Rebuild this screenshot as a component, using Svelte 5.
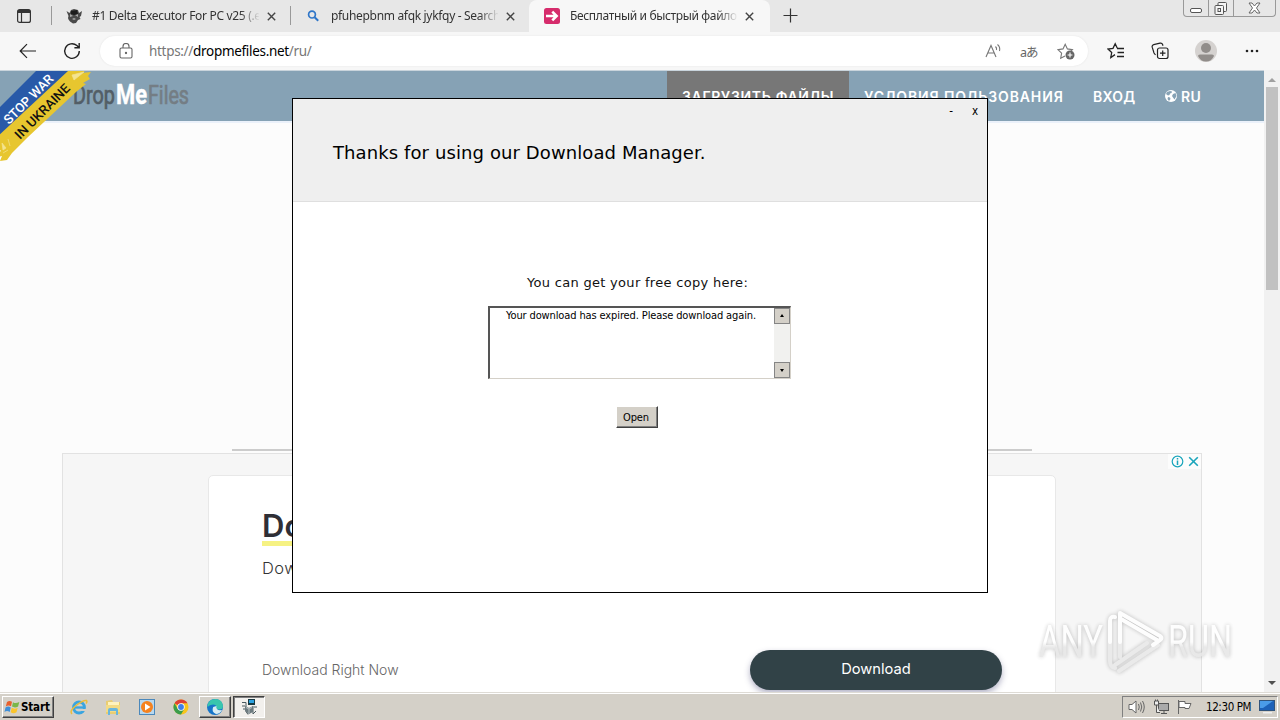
<script lang="ts">
  const tabs = [
    { icon: 'delta', title: '#1 Delta Executor For PC v25 (.exe)', active: false },
    { icon: 'search', title: 'pfuhepbnm afqk jykfqy - Search', active: false },
    { icon: 'arrow', title: 'Бесплатный и быстрый файлообменник', active: true },
  ];

  const nav = [
    { label: 'ЗАГРУЗИТЬ ФАЙЛЫ', cls: 'upload' },
    { label: 'УСЛОВИЯ ПОЛЬЗОВАНИЯ', cls: 'terms' },
    { label: 'ВХОД', cls: 'login' },
  ];
</script>

<div class="screen">
  <div class="tabstrip">
    <div class="tab-menu">
      <svg width="16" height="16" viewBox="0 0 16 16" fill="none" stroke="#333" stroke-width="1.2">
        <rect x="1.6" y="1.6" width="12.8" height="12.8" rx="2" />
        <path d="M2 3.5h12" stroke-width="3" />
        <path d="M5.5 5v9" />
      </svg>
    </div>

    {#each tabs as tab}
      <div class="tab" class:active={tab.active}>
        <span class="favicon">
          {#if tab.icon === 'delta'}
            <svg width="16" height="16" viewBox="0 0 16 16">
              <path d="M.5 3l3 2 1.500-3L8 1l4 1 1 3 3-2-1 5-1.500 1 1 2-2.500 1-2 3-3 .500-3-2-1.500-2L2 10l.5-2z" fill="#4a4a4a" />
              <path d="M4 6l3 2-3 1zM12 6l-3 1 3 2zM6 11l2-1 2 1-2 1z" fill="#aaa" />
              <path d="M5 3l6-1 1 4-4 1-3-1z" fill="#1c1c1c" />
            </svg>
          {:else if tab.icon === 'search'}
            <svg width="16" height="16" viewBox="0 0 16 16" fill="none" stroke="#2f76c8" stroke-width="1.7">
              <circle cx="7" cy="6.600" r="3.400" />
              <path d="M9.600 9.200l3.600 3.600" stroke-width="2" />
            </svg>
          {:else}
            <svg width="16" height="16" viewBox="0 0 16 16">
              <rect width="16" height="16" rx="2.5" fill="#d62c6c" />
              <path d="M2 8h10M8.3 3.7L12.6 8l-4.3 4.3" fill="none" stroke="#fff" stroke-width="2.6" />
            </svg>
          {/if}
        </span>
        <span class="tab-title">{tab.title}</span>
        <svg class="tab-close" width="9" height="9" viewBox="0 0 9 9" stroke="#444" stroke-width="1.4">
          <path d="M.8.8l7.4 7.4M8.2.8L.8 8.2" />
        </svg>
      </div>
    {/each}

    <svg class="new-tab" width="15" height="15" viewBox="0 0 15 15" stroke="#333" stroke-width="1.2">
      <path d="M7.5.5v14M.5 7.5h14" />
    </svg>

    <div class="caption">
      <span class="cap">
        <svg width="13" height="17" viewBox="0 0 13 17" fill="#fff" stroke="#555">
          <rect x=".5" y="8.5" width="11" height="4" rx="1.5" />
        </svg>
      </span>
      <span class="cap">
        <svg width="14" height="17" viewBox="0 0 14 17" fill="#f4f4f4" stroke="#555">
          <rect x="4" y="2.5" width="8.5" height="9" rx="1" />
          <rect x="1" y="5.5" width="8.5" height="9" rx="1" />
          <rect x="4" y="8.5" width="2.5" height="3" />
        </svg>
      </span>
      <span class="cap close">
        <svg width="13" height="17" viewBox="0 0 13 17" fill="#fff" stroke="#666">
          <path d="M1 3h3l2.500 3L9 3h3L8.500 8l3.500 5H9l-2.500-3L4 13H1l3.500-5z" />
        </svg>
      </span>
    </div>
  </div>

  <div class="toolbar">
    <svg class="back" width="18" height="16" viewBox="0 0 18 16" fill="none" stroke="#222" stroke-width="1.2">
      <path d="M17 8H1.500M8 1.200L1.200 8 8 14.800" />
    </svg>
    <svg class="reload" width="18" height="18" viewBox="0 0 18 18" fill="none" stroke="#222" stroke-width="1.4">
      <path d="M16.300 9a7.300 7.300 0 1 1-2.400-5.400l1.900 1.900M16.200 1v4.800h-4.800" />
    </svg>

    <div class="address">
      <svg class="lock" width="14" height="16" viewBox="0 0 14 16" fill="none" stroke="#666" stroke-width="1.1">
        <rect x="1" y="5" width="12" height="10" rx="1.500" />
        <path d="M4 5V3.500a3 3 0 0 1 6 0V5" />
        <circle cx="7" cy="10" r=".6" fill="#666" />
      </svg>
      <span class="url">https://<b>dropmefiles.net</b>/ru/</span>
      <svg class="read" width="17" height="16" viewBox="0 0 17 16" fill="none" stroke="#777" stroke-width="1.1">
        <path d="M1 14L6 2.500 11 14M2.800 10h6.400M10.500 3.500q1.500 1.500 1 3.500M12.500 1.500q3 2.500 2 6.500" />
      </svg>
      <span class="translate">aあ</span>
      <svg class="fav-add" width="18" height="18" viewBox="0 0 18 18" fill="none" stroke="#777" stroke-width="1.1">
        <path d="M8 14l-4.300 2.200.9-5L1 7.600l5-.7 2.200-4.600 2.200 4.600 5 .7-1.500 1.500" />
        <circle cx="13" cy="13" r="4.500" fill="#666" stroke="none" />
        <path d="M13 10.600v4.800M10.600 13h4.800" stroke="#fff" />
      </svg>
    </div>

    <svg class="favs" width="18" height="18" viewBox="0 0 18 18" fill="none" stroke="#222" stroke-width="1.3">
      <path d="M8 12.600l-4.200 2.900.9-5L1 7l5-.7L8.200 1.800l2 4.200M10 6.500h7M10.500 10.500H17M10 14.500h7" />
    </svg>
    <svg class="collections" width="18" height="18" viewBox="0 0 18 18" fill="none" stroke="#222" stroke-width="1.2">
      <rect x="6.500" y="6" width="10.500" height="10.500" rx="2" />
      <path d="M11.700 8.500v5.500M9 11.200h5.500M4.500 13L3 11 1.200 5.200q-.5-2 1.500-2.600L9 1.200q2-.4 2.600 1.300l.4 1.200" />
    </svg>
    <svg class="avatar" width="22" height="22" viewBox="0 0 22 22">
      <circle cx="11" cy="11" r="11" fill="#d5d2d0" />
      <circle cx="11" cy="8" r="5" fill="#918d8a" />
      <path d="M3 16q0-1.500 2-1.500h12q2 0 2 1.500-2.500 5.500-8 5.500T3 16z" fill="#918d8a" />
    </svg>
    <svg class="more" width="14" height="4" viewBox="0 0 14 4" fill="#222">
      <circle cx="2" cy="2" r="1.300" /><circle cx="7" cy="2" r="1.300" /><circle cx="12" cy="2" r="1.300" />
    </svg>
  </div>

  <div class="viewport">
    <div class="page">
      <header>
        <svg class="logo" width="120" height="34" viewBox="0 0 120 34">
          <text x="1" y="25" textLength="42" lengthAdjust="spacingAndGlyphs" class="logo-drop">Drop</text>
          <text x="44" y="25" textLength="31" lengthAdjust="spacingAndGlyphs" class="logo-me">Me</text>
          <text x="76" y="25" textLength="41" lengthAdjust="spacingAndGlyphs" class="logo-files">Files</text>
        </svg>
        <nav>
          {#each nav as item}
            <span class="nav-item {item.cls}">{item.label}</span>
          {/each}
          <span class="nav-item lang">
            <svg width="12" height="12" viewBox="0 0 12 12">
              <circle cx="6" cy="6" r="6" fill="#fff" />
              <path d="M5 1l2 .5L6.500 3 5 3.500 4.500 5 3 5.500 1 4 2 2zM8 4l2.500-1 1 3-2 3.500-1.500-2L7 6zM3 7l2 .5.500 1.500L4 11 2.500 9z" fill="#86a2b5" />
            </svg>
            RU
          </span>
        </nav>
      </header>

      <div class="rule"></div>

      <div class="ad">
        <div class="ad-card">
          <h1><span>Download</span></h1>
          <p class="ad-text">Download</p>
          <div class="ad-row">
            <span class="ad-note">Download Right Now</span>
            <button class="ad-button">Download</button>
          </div>
        </div>
        <div class="ad-badge">
          <svg width="13" height="13" viewBox="0 0 13 13" fill="none" stroke="#1aa5bb" stroke-width="1.200">
            <circle cx="6.500" cy="6.500" r="5.300" />
            <path d="M6.500 5.500v4.500M6.500 3v1.400" stroke-width="1.500" />
          </svg>
          <svg width="11" height="11" viewBox="0 0 11 11" stroke="#1aa5bb" stroke-width="1.600">
            <path d="M1.200 1.200l8.600 8.600M9.800 1.200L1.200 9.800" />
          </svg>
        </div>
      </div>
    </div>

    <div class="scrollbar">
      <span class="arrow-up"></span>
      <span class="thumb"></span>
      <span class="arrow-down"></span>
    </div>

    <svg class="ribbon" width="92" height="92" viewBox="0 0 92 92">
      <path d="M36 0h35L0 68V36z" fill="#2859a8" />
      <path d="M68 0h17l-3 2 9-1-3 4 2 3-7 4 3 1-10 8-48 45-16 16-5 7-7 1 2-5-4 1 3-7-5 3 1-7-2-7z" fill="#e7c62f" />
      <path d="M72 4l12-3-10 8zM2 72l4 5-3 2zM8 68l2 7M3 82l5-3" fill="#f4e491" stroke="#f4e491" stroke-width=".7" />
      <text transform="translate(9 54) rotate(-45)" textLength="64" lengthAdjust="spacingAndGlyphs" fill="#fff">STOP WAR</text>
      <text transform="translate(20 69) rotate(-45)" textLength="72" lengthAdjust="spacingAndGlyphs" fill="#111">IN UKRAINE</text>
    </svg>
  </div>

  <div class="taskbar">
    <div class="start">
      <svg width="17" height="16" viewBox="0 0 16 16">
        <path d="M2.500 3Q5 1 7.500 2.800L6.500 7.300Q4 5.700 1.300 7.500z" fill="#e8602c" />
        <path d="M8.500 3.200Q11 5 14.800 3L13.600 7.500Q10.500 9.300 7.500 7.600z" fill="#7ab648" />
        <path d="M1 8.500Q3.700 6.800 6.200 8.400L5.200 13Q2.500 11.200 0 13z" fill="#3f8fd8" />
        <path d="M7.200 8.800Q10 10.500 13.200 8.700L12 13.300Q9 15 6.200 13.300z" fill="#fbc52c" />
      </svg>
      <span>Start</span>
    </div>

    <div class="quick">
      <svg width="18" height="18" viewBox="0 0 18 18" fill="none">
        <circle cx="9" cy="9.500" r="5.400" stroke="#3aa5e0" stroke-width="3" />
        <path d="M5 9.500h10" stroke="#3aa5e0" stroke-width="2.300" />
        <path d="M11 12h6" stroke="#d4d0c8" stroke-width="2" />
        <path d="M2 16Q-1 13 6 7.500T16.500 2.500q1 1-.5 3" stroke="#ecbd3b" stroke-width="1.500" />
      </svg>
      <svg width="18" height="18" viewBox="0 0 18 18">
        <path d="M2 3l6-1 1 2h7v12H2z" fill="#e9cd72" />
        <path d="M4 4h11v5H4z" fill="#fff3bd" />
        <path d="M2 7h14v7H2z" fill="#f3db85" />
        <path d="M4 17v-5q0-2 2-2h6q2 0 2 2v5h-2v-4H6v4z" fill="#69b6dd" />
      </svg>
      <svg width="18" height="18" viewBox="0 0 18 18">
        <rect x="1.500" y="1.500" width="15" height="15" fill="#b8d8ef" stroke="#4b88bb" />
        <circle cx="9" cy="9" r="6" fill="#f5821f" />
        <path d="M7 5.500l5.500 3.500L7 12.500z" fill="#fff" />
      </svg>
      <svg width="18" height="18" viewBox="0 0 18 18">
        <circle cx="9" cy="9" r="7.500" fill="#f8c51c" />
        <path d="M2.500 5.250A7.500 7.500 0 0 1 15.500 5.250L9 5.250 9 9z" fill="#dd4036" />
        <path d="M2.500 5.250A7.500 7.500 0 0 0 9 16.500L12.200 10.900 9 9 5.800 10.900z" fill="#3a9c4b" />
        <circle cx="9" cy="9" r="3.700" fill="#fff" />
        <circle cx="9" cy="9" r="2.900" fill="#3f7fe8" />
      </svg>
    </div>

    <div class="task edge">
      <svg width="18" height="18" viewBox="0 0 18 18">
        <circle cx="9" cy="9" r="8" fill="#1675c9" />
        <path d="M1.500 7Q3 1 9.500 1t7.500 7q0 3.500-4 3.500-3 0-2.600-2Q10.500 6.500 7 6.500T1.500 9z" fill="#39c6ad" />
        <path d="M10.500 8q-1 5 5.500 4-2 4-6 4-5-2-2.800-7z" fill="#d8edf3" />
      </svg>
    </div>
    <div class="task pressed">
      <svg width="18" height="18" viewBox="0 0 18 18">
        <path d="M2 4.500h4v9l2 3M2 8h3M3 11h3M13 8v8l3-3M14 9h3" fill="none" stroke="#4a5a60" />
        <path d="M8 1h7v6H8z" fill="#173942" />
        <path d="M9 2h5v3H9z" fill="#2ba1df" />
        <path d="M5 8l4 2 4-2v6l-4 2-4-3z" fill="#6d7b80" />
        <path d="M6 9.500l3 1.500 3-1.500M9 11v4" fill="none" stroke="#c9d0d2" stroke-width=".8" />
      </svg>
    </div>

    <div class="tray">
      <svg class="speaker" width="18" height="16" viewBox="0 0 18 16" fill="#fff" stroke="#666">
        <path d="M1 5.500h3L8 2v12l-4-3.500H1z" />
        <path d="M10.500 5q1.500 3 0 6M12.500 3.500q2.500 4.500 0 9M14.500 2q3.500 6 0 12" fill="none" />
      </svg>
      <svg class="network" width="17" height="16" viewBox="0 0 17 16" fill="#eee" stroke="#555">
        <rect x="5.500" y="4.500" width="10" height="7" fill="#aaa" />
        <path d="M8 14.500h6M11 11.500v3M1.500 2v4h4V2zM2.500.5V2M4.500.5V2M3.500 6v7.500H7" />
      </svg>
      <svg class="flag" width="17" height="16" viewBox="0 0 17 16" fill="#fff" stroke="#666">
        <path d="M2.500 1v14" />
        <path d="M3 2.500h6v2h6l-2 5H9v-1H3z" />
      </svg>
      <span class="clock">12:30 PM</span>
      <svg class="desktop" width="16" height="14" viewBox="0 0 16 14">
        <rect x=".5" y=".5" width="15" height="10" fill="#1d61b8" stroke="#31547c" />
        <path d="M1 1h13L4 8H1z" fill="#4a9be8" />
        <path d="M4 12h9v1.500H4z" fill="#eee" />
      </svg>
    </div>
  </div>

  <div class="dialog">
    <div class="dialog-head">
      <div class="dialog-controls"><span>-</span><span>x</span></div>
      <h2>Thanks for using our Download Manager.</h2>
    </div>
    <div class="dialog-body">
      <p>You can get your free copy here:</p>
      <div class="textbox">
        <span class="textbox-text">Your download has expired. Please download again.</span>
        <div class="textbox-bar">
          <span class="bar-button"><i class="up"></i></span>
          <span class="bar-button"><i class="down"></i></span>
        </div>
      </div>
      <button class="open">Open</button>
    </div>
  </div>

  <svg class="watermark" width="210" height="76" viewBox="0 0 210 76">
    <defs>
      <linearGradient id="fade" x1="0" y1="0" x2="0" y2="1">
        <stop offset=".5" stop-color="#fff" />
        <stop offset=".6" stop-color="#e6e6e6" />
      </linearGradient>
    </defs>
    <text x="8" y="53" textLength="64" lengthAdjust="spacingAndGlyphs">ANY</text>
    <text x="137" y="53" textLength="64" lengthAdjust="spacingAndGlyphs">RUN</text>
    <g fill="none" stroke-linecap="round" stroke-linejoin="round">
      <path d="M79 38v19q0 6 5 7M89 38v15M88 67l39-26M84 61l32-22" stroke="#e8e8e8" stroke-width="4" />
      <path d="M84 13q-5-1-5 4v21M89 38V9l40 23q3 2 0 4L122 41M90 15l36 21" stroke="#fff" stroke-width="4" />
    </g>
  </svg>
</div>

<style>
  :global(body) {
    margin: 0;
  }

  .screen {
    position: relative;
    display: flex;
    flex-direction: column;
    width: 1280px;
    height: 720px;
    overflow: hidden;
    background: #fcfcfc;
    font-family: 'Noto Sans', sans-serif;
  }

  svg {
    display: block;
    flex: none;
  }

  /* browser tabs */
  .tabstrip {
    display: flex;
    height: 32px;
    flex: none;
    background: #e7e7e7;
  }

  .tab-menu {
    width: 51px;
    padding: 8px 0 0 16px;
    box-sizing: border-box;
  }

  .tab {
    display: flex;
    align-items: center;
    width: 239px;
    height: 32px;
    box-sizing: border-box;
    padding-left: 15px;
    background: linear-gradient(#999, #999) 0 6px / 1px 19px no-repeat;
  }

  .tab.active {
    width: 241px;
    background: #f7f7f7;
    border-radius: 8px 8px 0 0;
  }

  .favicon {
    width: 26px;
  }

  .tab-title {
    width: 167px;
    overflow: hidden;
    white-space: nowrap;
    font-size: 12px;
    line-height: 18px;
    margin-top: -1px;
    letter-spacing: -0.32px;
    color: #333;
    mask-image: linear-gradient(to right, #000 148px, transparent 168px);
  }

  .active .tab-title {
    letter-spacing: -0.35px;
  }

  .tab-close {
    margin-left: 8px;
  }

  .new-tab {
    margin: 8px 0 0 13px;
  }

  .caption {
    display: flex;
    height: 16px;
    margin: 0 4px 0 auto;
    border: 1px solid #999;
    border-top: 0;
    border-radius: 0 0 4px 4px;
  }

  .cap {
    display: flex;
    justify-content: center;
    width: 24px;
    border-right: 1px solid #999;
  }

  .cap.close {
    width: 41px;
    border: 0;
  }

  /* address row */
  .toolbar {
    display: flex;
    align-items: center;
    height: 38px;
    flex: none;
    background: #f7f7f7;
  }

  .back {
    margin-left: 19px;
  }

  .reload {
    margin-left: 26px;
  }

  .address {
    display: flex;
    align-items: center;
    width: 988px;
    height: 30px;
    margin-left: 19px;
    border-radius: 15px;
    background: #fff;
    box-shadow: 0 0 2px #e2e2e2;
  }

  .lock {
    margin-left: 19px;
  }

  .url {
    width: 817px;
    margin: -1px 0 0 16px;
    font-size: 13.500px;
    letter-spacing: -0.31px;
    color: #777;
  }

  .url b {
    font-weight: 400;
    color: #000;
  }

  .read {
    margin-left: 19px;
  }

  .translate {
    width: 22px;
    margin-left: 18px;
    font: 12.500px 'Noto Sans', 'Noto Sans CJK JP', sans-serif;
    letter-spacing: -1px;
    color: #666;
  }

  .fav-add {
    margin-left: 15px;
  }

  .favs {
    margin-left: 19px;
  }

  .collections {
    margin-left: 26px;
  }

  .avatar {
    margin-left: 26px;
  }

  .more {
    margin-left: 28px;
  }

  /* site */
  .viewport {
    position: relative;
    display: flex;
    height: 622px;
    flex: none;
  }

  .page {
    width: 1264px;
    border-top: 1px solid #c9d4dc;
    box-sizing: border-box;
    overflow: hidden;
  }

  header {
    display: flex;
    height: 50px;
    background: #86a2b5;
    border-bottom: 2px solid #ebf1fa;
  }

  .logo {
    margin: 8px 0 0 72px;
    font-family: 'Roboto', sans-serif;
    font-size: 25px;
  }

  .logo-drop {
    fill: #535e66;
    stroke: #535e66;
    stroke-width: 0.7px;
  }

  .logo-me {
    fill: #fff;
    stroke: #fff;
    stroke-width: 0.4px;
    font-size: 28px;
    font-weight: 700;
  }

  .logo-files {
    fill: #747d84;
    stroke: #747d84;
    stroke-width: 0.7px;
  }

  nav {
    display: flex;
    margin-left: 475px;
  }

  .nav-item {
    display: flex;
    align-items: center;
    box-sizing: border-box;
    padding-left: 15px;
    font-family: 'Inter', sans-serif;
    font-size: 14px;
    font-weight: 600;
    white-space: nowrap;
    color: #fff;
  }

  .upload {
    width: 182px;
    background: #777;
    letter-spacing: 0.65px;
  }

  .terms {
    width: 229px;
    letter-spacing: 0.87px;
  }

  .login {
    width: 72px;
    letter-spacing: 0.3px;
  }

  .lang {
    gap: 4px;
    letter-spacing: 0.3px;
  }

  .rule {
    width: 800px;
    height: 2px;
    margin: 326px 0 0 232px;
    background: #ccc;
  }

  .ad {
    position: relative;
    width: 1138px;
    height: 260px;
    margin: 2px 0 0 62px;
    border: 1px solid #e2e2e2;
    background: #f6f6f6;
    display: flow-root;
  }

  .ad-card {
    width: 848px;
    height: 240px;
    margin: 21px 0 0 145px;
    box-sizing: border-box;
    padding: 31px 53px 0;
    border: 1px solid #e8e8e8;
    border-radius: 5px;
    background: #fff;
  }

  h1 {
    height: 38px;
    margin: 0;
    font: 600 31px/38px 'Inter', sans-serif;
    color: #2f2f36;
  }

  h1 span {
    display: inline-block;
    height: 33px;
    line-height: 36px;
    border-bottom: 5px solid #f6f283;
  }

  .ad-text {
    margin: 10px 0 0;
    font: 300 16.500px/26px 'Inter', sans-serif;
    letter-spacing: 0.4px;
    color: #333;
  }

  .ad-row {
    display: flex;
    align-items: center;
    justify-content: space-between;
    margin-top: 68px;
  }

  .ad-note {
    margin-top: -1px;
    font: 300 14px 'Inter', sans-serif;
    color: #666;
  }

  .ad-button {
    width: 252px;
    height: 40px;
    margin-top: 1px;
    padding-bottom: 3px;
    border: 0;
    border-radius: 20px;
    background: #314247;
    box-shadow: 0 3px 6px rgba(60, 60, 110, 0.4);
    color: #fff;
    font: 14.700px 'Inter', sans-serif;
  }

  .ad-badge {
    position: absolute;
    top: 0;
    right: 0;
    display: flex;
    align-items: center;
    gap: 4px;
    height: 15px;
    padding: 0 2px 0 3px;
    background: #fcfcfc;
  }

  .scrollbar {
    display: flex;
    flex-direction: column;
    align-items: center;
    width: 16px;
    background: #f1f1f1;
  }

  .arrow-up,
  .arrow-down {
    border: 4px solid transparent;
    border-top: 0;
    border-bottom: 4px solid #a0a0a0;
    margin-top: 8px;
  }

  .thumb {
    width: 12px;
    height: 203px;
    margin-top: 5px;
    background: #c1c1c1;
  }

  .arrow-down {
    margin: auto 0 7px;
    border-top: 4px solid #505050;
    border-bottom: 0;
  }

  .ribbon {
    position: absolute;
    top: 1px;
    left: 0;
    font: 500 13px 'Roboto', sans-serif;
  }

  /* taskbar */
  .taskbar {
    display: flex;
    height: 28px;
    flex: none;
    box-sizing: border-box;
    padding-top: 3px;
    background: #d4d0c8;
    border-top: 1px solid #dedbd5;
    box-shadow: inset 0 1px #fff;
  }

  .start {
    display: flex;
    align-items: center;
    width: 52px;
    height: 22px;
    margin-left: 2px;
    box-sizing: border-box;
    padding-left: 1px;
    border: 1px solid #fff;
    border-right-color: #404040;
    border-bottom-color: #404040;
    box-shadow: inset -1px -1px #808080;
    font: bold 11.500px 'DejaVu Sans Condensed', 'DejaVu Sans', sans-serif;
    letter-spacing: -0.15px;
    color: #000;
  }

  .quick {
    display: flex;
    gap: 16px;
    margin: 2px 0 0 16px;
  }

  .task {
    display: flex;
    align-items: center;
    justify-content: center;
    width: 32px;
    height: 22px;
    box-sizing: border-box;
    border: 1px solid #fff;
    border-right-color: #404040;
    border-bottom-color: #404040;
    box-shadow: inset -1px -1px #808080;
  }

  .edge {
    margin-left: 9px;
  }

  .pressed {
    margin-left: 2px;
    border-color: #404040 #fff #fff #404040;
    box-shadow: inset 1px 1px #808080;
    background: #f2f0ed;
  }

  .tray {
    display: flex;
    align-items: center;
    width: 156px;
    height: 22px;
    box-sizing: border-box;
    margin: 0 2px 0 auto;
    padding-left: 5px;
    border: 1px solid #808080;
    border-right-color: #fff;
    border-bottom-color: #fff;
  }

  .network {
    margin-left: 7px;
  }

  .flag {
    margin-left: 6px;
  }

  .clock {
    width: 53px;
    margin-left: 13px;
    font: 11.500px 'DejaVu Sans Condensed', 'DejaVu Sans', sans-serif;
    letter-spacing: -0.4px;
    white-space: nowrap;
    color: #000;
  }

  /* installer window */
  .dialog {
    position: absolute;
    top: 98px;
    left: 292px;
    width: 696px;
    height: 495px;
    box-sizing: border-box;
    border: 1px solid #000;
    background: #fff;
    font-family: 'DejaVu Sans', sans-serif;
    color: #000;
  }

  .dialog-head {
    height: 102px;
    background: #efefef;
    border-bottom: 1px solid #dfdfdf;
  }

  .dialog-controls {
    display: flex;
    justify-content: flex-end;
    gap: 19px;
    height: 26px;
    padding-right: 9px;
    font: 11.500px/25px 'DejaVu Sans Condensed', 'DejaVu Sans', sans-serif;
  }

  h2 {
    margin: 15px 0 0 40px;
    font-size: 18px;
    line-height: 26px;
    font-weight: 400;
    letter-spacing: 0.1px;
  }

  .dialog-body {
    display: flex;
    flex-direction: column;
    align-items: flex-start;
  }

  .dialog-body p {
    margin: 71px 0 0 234px;
    font-size: 13px;
    line-height: 20px;
    letter-spacing: 0.3px;
    color: #111;
  }

  .textbox {
    display: flex;
    width: 303px;
    height: 73px;
    margin: 13px 0 0 195px;
    box-sizing: border-box;
    border: 1px solid #d4d0c8;
    border-top: 2px solid #555;
    border-left: 2px solid #555;
  }

  .textbox-text {
    flex: 1;
    padding-left: 16px;
    font: 11px/15px 'DejaVu Sans Condensed', 'DejaVu Sans', sans-serif;
    letter-spacing: -0.12px;
    white-space: nowrap;
  }

  .textbox-bar {
    display: flex;
    flex-direction: column;
    justify-content: space-between;
    width: 16px;
    background: #f1f1ef;
  }

  .bar-button {
    display: flex;
    align-items: center;
    justify-content: center;
    width: 16px;
    height: 16px;
    box-sizing: border-box;
    border: 1px solid #858585;
    background: #d4d0c8;
  }

  .bar-button i {
    border: 2.500px solid transparent;
  }

  .bar-button .up {
    margin-top: -3px;
    border-bottom: 3px solid #000;
  }

  .bar-button .down {
    margin-top: 3px;
    border-top: 3px solid #000;
  }

  .open {
    width: 42px;
    height: 22px;
    margin: 27px 0 0 323px;
    padding: 0 2px 0 0;
    border: 1px solid #fff;
    border-right-color: #404040;
    border-bottom-color: #404040;
    background: #d4d0c8;
    box-shadow: inset -1px -1px #808080;
    font: 11px 'DejaVu Sans Condensed', 'DejaVu Sans', sans-serif;
    letter-spacing: -0.1px;
    color: #000;
  }

  .watermark {
    position: absolute;
    top: 604px;
    left: 1031px;
    filter: drop-shadow(0 0 2px rgba(0, 0, 0, 0.28));
    font: 44px 'Roboto', sans-serif;
    fill: url(#fade);
    opacity: 0.85;
  }
</style>
